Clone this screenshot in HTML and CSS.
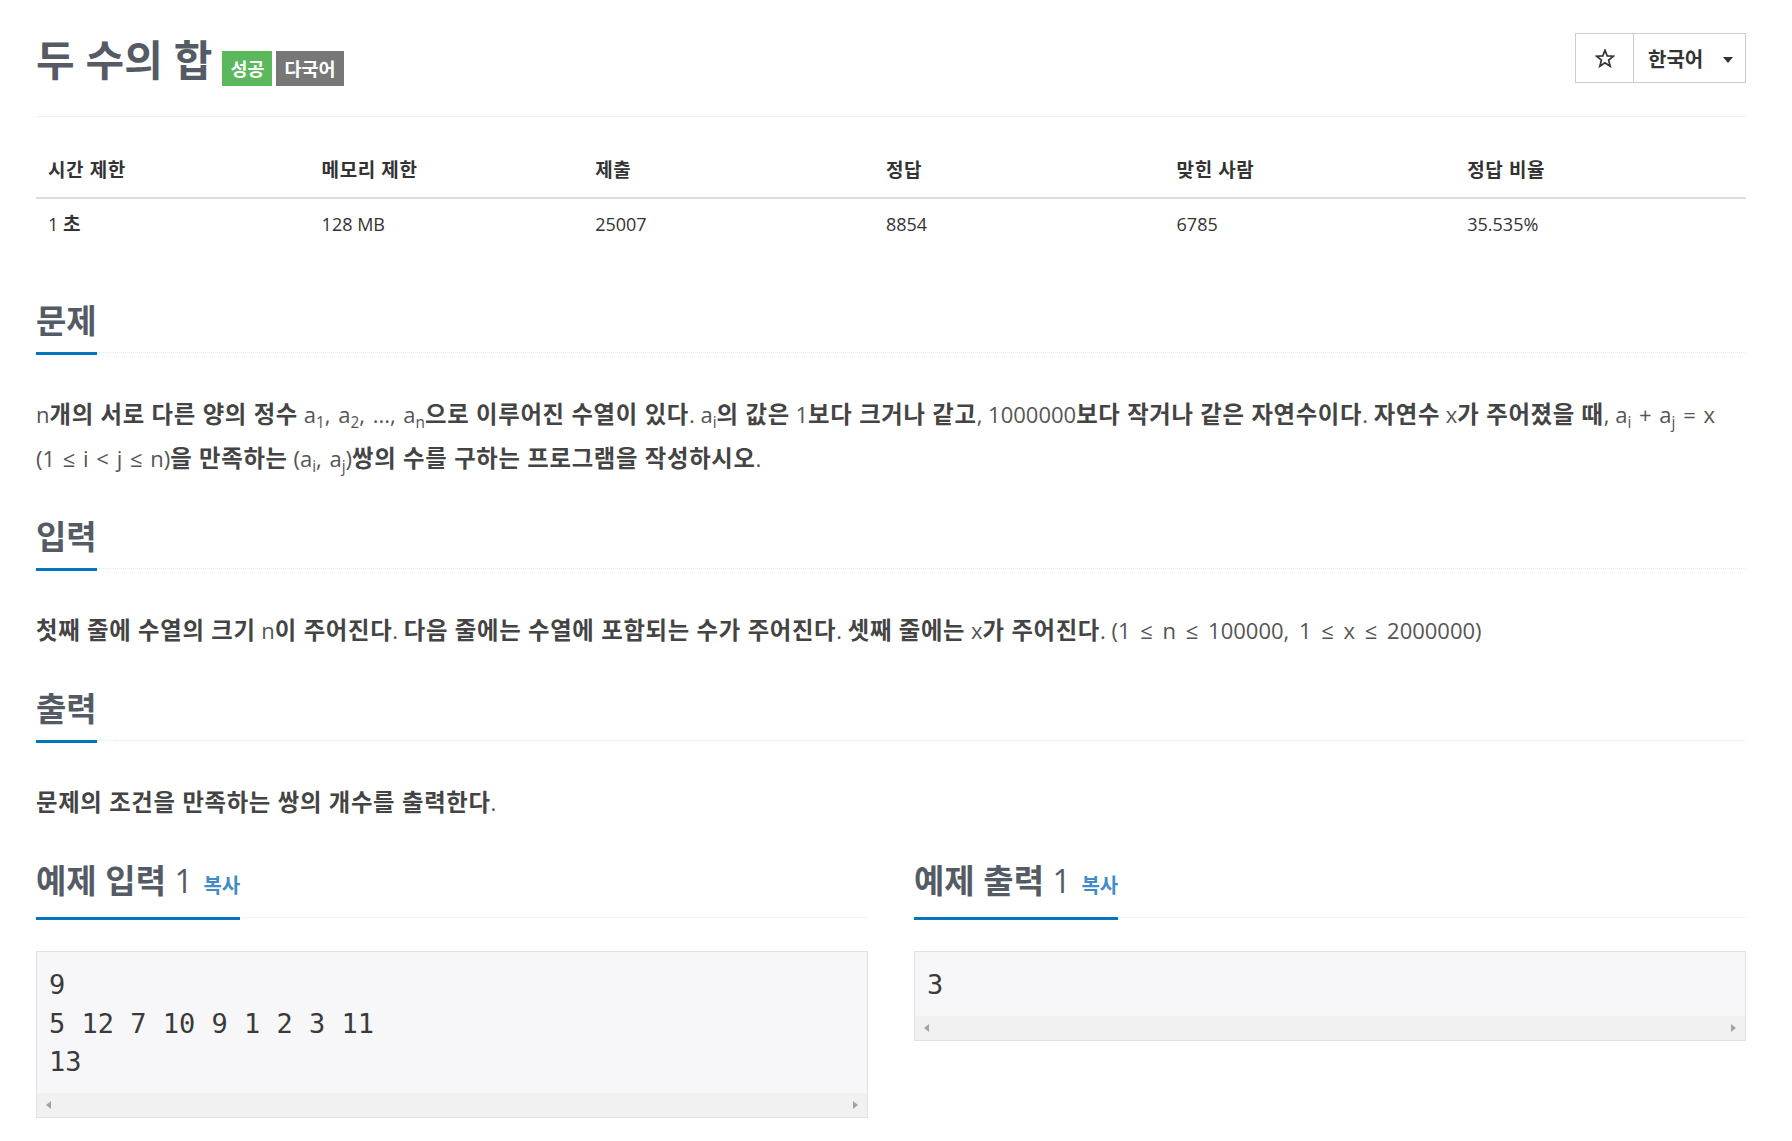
FILE: index.html
```html
<!DOCTYPE html>
<html lang="ko">
<head>
<meta charset="utf-8">
<title>두 수의 합</title>
<link rel="stylesheet" href="styles.css">
</head>
<body>
<div class="container">
  <div class="page-header">
    <h1 class="title">
      <span class="title-text">두 수의 합</span>
      <span class="badge badge-success">성공</span>
      <span class="badge badge-gray">다국어</span>
    </h1>
    <div class="btn-group">
      <button class="btn btn-star" aria-label="즐겨찾기">
        <svg class="star" width="20" height="19" viewBox="0 0 20 19" aria-hidden="true"><polygon points="10,1.2 12.2,6.9 18.4,7.2 13.6,11.1 15.2,17.3 10,13.8 4.8,17.3 6.4,11.1 1.6,7.2 7.8,6.9" fill="none" stroke="#333" stroke-width="1.7" stroke-linejoin="miter"/></svg>
      </button>
      <button class="btn btn-lang"><span>한국어</span><span class="caret"></span></button>
    </div>
  </div>

  <table class="info-table">
    <thead>
      <tr>
        <th class="c1">시간 제한</th>
        <th class="c2">메모리 제한</th>
        <th class="c3">제출</th>
        <th class="c4">정답</th>
        <th class="c5">맞힌 사람</th>
        <th class="c6">정답 비율</th>
      </tr>
    </thead>
    <tbody>
      <tr>
        <td>1 <b>초</b></td>
        <td>128 MB</td>
        <td>25007</td>
        <td>8854</td>
        <td>6785</td>
        <td>35.535%</td>
      </tr>
    </tbody>
  </table>

  <section class="section first">
    <h2 class="headline"><span class="headline-in">문제</span></h2>
    <p class="desc"><span class="math">n</span><b>개의 서로 다른 양의 정수</b> <span class="math">a<sub>1</sub>, a<sub>2</sub>, ..., a<sub>n</sub></span><b>으로 이루어진 수열이 있다</b>. <span class="math">a<sub>i</sub></span><b>의 값은</b> <span class="math">1</span><b>보다 크거나 같고</b>, <span class="math">1000000</span><b>보다 작거나 같은 자연수이다</b>. <b>자연수</b> <span class="math">x</span><b>가 주어졌을 때</b>, <span class="math">a<sub>i</sub> + a<sub>j</sub> = x</span> <span class="math">(1 ≤ i &lt; j ≤ n)</span><b>을 만족하는</b> <span class="math">(a<sub>i</sub>, a<sub>j</sub>)</span><b>쌍의 수를 구하는 프로그램을 작성하시오</b>.</p>
  </section>

  <section class="section">
    <h2 class="headline"><span class="headline-in">입력</span></h2>
    <p class="desc"><b>첫째 줄에 수열의 크기</b> <span class="math">n</span><b>이 주어진다</b>. <b>다음 줄에는 수열에 포함되는 수가 주어진다</b>. <b>셋째 줄에는</b> <span class="math">x</span><b>가 주어진다</b>. <span class="math wide">(1 ≤ n ≤ 100000, 1 ≤ x ≤ 2000000)</span></p>
  </section>

  <section class="section">
    <h2 class="headline"><span class="headline-in">출력</span></h2>
    <p class="desc"><b>문제의 조건을 만족하는 쌍의 개수를 출력한다</b>.</p>
  </section>

  <div class="samples">
    <section class="sample">
      <h2 class="headline"><span class="headline-in">예제 입력 <span class="num">1</span> <span class="copy">복사</span></span></h2>
      <div class="sample-box">
        <pre class="sample-data">9
5 12 7 10 9 1 2 3 11
13</pre>
        <div class="scrollbar"><span class="arrow-left"></span><span class="arrow-right"></span></div>
      </div>
    </section>
    <section class="sample">
      <h2 class="headline"><span class="headline-in">예제 출력 <span class="num">1</span> <span class="copy">복사</span></span></h2>
      <div class="sample-box">
        <pre class="sample-data">3</pre>
        <div class="scrollbar"><span class="arrow-left"></span><span class="arrow-right"></span></div>
      </div>
    </section>
  </div>
</div>
</body>
</html>
```

FILE: styles.css
```css
* {
  box-sizing: border-box;
}

html, body {
  margin: 0;
  padding: 0;
  background: #fff;
}

body {
  font-family: "Open Sans", "Noto Sans CJK KR", sans-serif;
  color: #555;
}

.container {
  padding: 0 46px 40px 36px;
}

/* Header */
.page-header {
  display: flex;
  justify-content: space-between;
  align-items: flex-start;
  padding: 33px 0 30px;
  border-bottom: 1px solid #eee;
}

.title {
  display: flex;
  align-items: flex-start;
  margin: 3px 0 0;
  font-size: 42px;
  line-height: 48px;
  font-weight: 700;
  color: #545b65;
}

.badge {
  display: inline-block;
  margin-top: 15px;
  height: 35px;
  line-height: 35px;
  padding: 0 8px;
  font-size: 18.5px;
  font-weight: 700;
  color: #fff;
}

.badge-success {
  background: #5cb85c;
  margin-left: 10px;
}

.badge-gray {
  background: #777;
  margin-left: 4px;
}

.btn-group {
  display: flex;
}

.btn {
  height: 50px;
  border: 1px solid #ccc;
  background: #fff;
  color: #333;
  display: flex;
  align-items: center;
  font-family: "Open Sans", "Noto Sans CJK KR", sans-serif;
  margin: 0;
  padding: 0;
}

.btn-star {
  width: 59px;
  justify-content: center;
}

.star {
  display: block;
}

.btn-lang {
  width: 113px;
  margin-left: -1px;
  padding: 0 12px 0 14px;
  justify-content: space-between;
  font-size: 20px;
  font-weight: 700;
}

.caret {
  width: 0;
  height: 0;
  border-top: 6px solid #333;
  border-left: 5.5px solid transparent;
  border-right: 5.5px solid transparent;
  margin-top: 3px;
}

/* Info table */
.info-table {
  width: 100%;
  border-collapse: collapse;
  margin-top: 30px;
  font-size: 18px;
  color: #333;
}

.info-table th {
  text-align: left;
  font-weight: 700;
  font-size: 19px;
  letter-spacing: 0.6px;
  padding: 10px 12px 14px;
  line-height: 26px;
  border-bottom: 2px solid #ddd;
}

.info-table td {
  padding: 12px 12px;
  line-height: 26px;
  font-weight: 400;
}

.info-table td b {
  font-size: 1.06em;
  letter-spacing: 0.035em;
}

.info-table .c1,
.info-table .c2 {
  width: 16%;
}

.info-table .c3,
.info-table .c4,
.info-table .c5,
.info-table .c6 {
  width: 17%;
}

/* Sections */
.section {
  margin-top: 39px;
}

.section.first {
  margin-top: 54px;
}

.headline {
  display: flex;
  margin: 0;
  border-bottom: 1px dotted #e4e9f0;
  font-size: 33px;
  line-height: 35px;
  font-weight: 700;
  color: #545b65;
}

.headline-in {
  display: block;
  border-bottom: 3px solid #0076c0;
  padding-bottom: 14px;
  margin-bottom: -3px;
  white-space: nowrap;
}

.headline .num {
  font-weight: 400;
  font-size: 32px;
}

.headline .copy {
  font-size: 20px;
  color: #428bca;
  font-weight: 700;
  margin-left: 2px;
}

.desc {
  margin: 39px 0 0;
  font-size: 22px;
  line-height: 44px;
  font-weight: 400;
  color: #555;
}

.desc b {
  font-weight: 700;
  font-size: 1.06em;
  letter-spacing: 0.03em;
  color: #444;
}

.math {
  white-space: nowrap;
  word-spacing: 2px;
}

.math.wide {
  word-spacing: 4px;
}

.desc sub {
  font-size: 70%;
  line-height: 0;
  vertical-align: -0.3em;
}

/* Samples */
.samples {
  display: grid;
  grid-template-columns: 1fr 1fr;
  column-gap: 46px;
  margin-top: 39px;
  align-items: start;
}

.sample-box {
  margin-top: 33px;
  border: 1px solid #e1e1e8;
  background: #f7f7f9;
}

.sample-data {
  margin: 0;
  padding: 14px 12px 11px;
  font-family: "DejaVu Sans Mono", monospace;
  font-size: 27px;
  line-height: 38.5px;
  color: #3a3a3a;
}

.scrollbar {
  height: 24px;
  background: #f1f1f1;
  display: flex;
  justify-content: space-between;
  align-items: center;
  padding: 0 9px;
}

.arrow-left {
  width: 0;
  height: 0;
  border-right: 5px solid #a3a3a3;
  border-top: 4px solid transparent;
  border-bottom: 4px solid transparent;
}

.arrow-right {
  width: 0;
  height: 0;
  border-left: 5px solid #a3a3a3;
  border-top: 4px solid transparent;
  border-bottom: 4px solid transparent;
}
```
